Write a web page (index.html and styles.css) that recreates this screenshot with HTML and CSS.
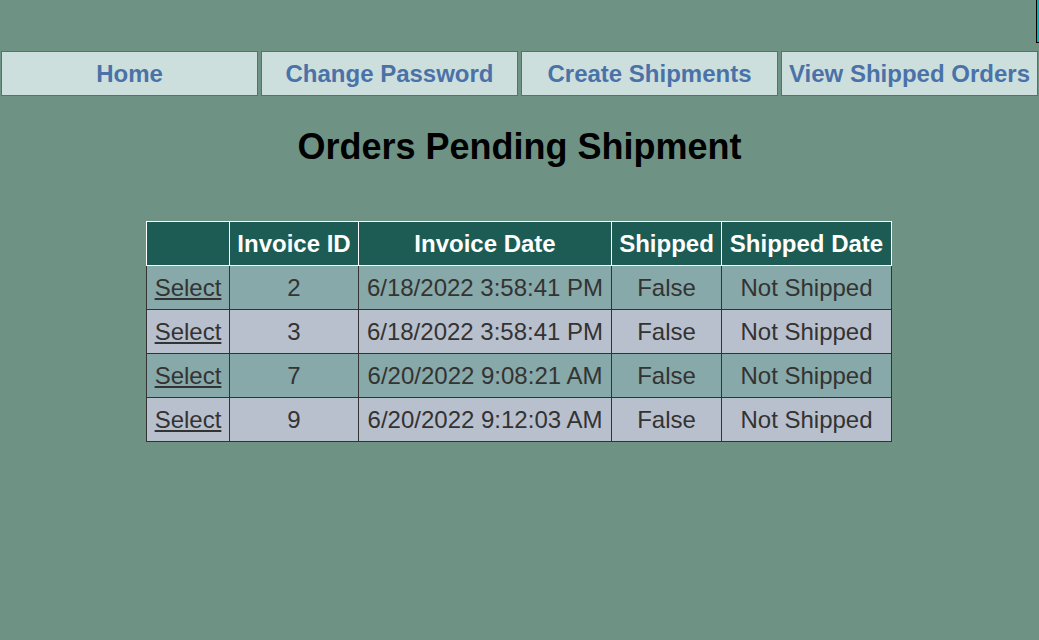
FILE: index.html
```html
<!DOCTYPE html>
<html>
<head>
<meta charset="utf-8">
<link rel="stylesheet" href="styles.css">
</head>
<body>
<div class="corner"></div>
<nav class="nav">
  <a class="nav-btn" href="#">Home</a>
  <a class="nav-btn" href="#">Change Password</a>
  <a class="nav-btn" href="#">Create Shipments</a>
  <a class="nav-btn" href="#">View Shipped Orders</a>
</nav>
<h1 class="title">Orders Pending Shipment</h1>
<table class="orders">
  <colgroup>
    <col class="c1"><col class="c2"><col class="c3"><col class="c4"><col class="c5">
  </colgroup>
  <thead>
    <tr><th></th><th>Invoice ID</th><th>Invoice Date</th><th>Shipped</th><th>Shipped Date</th></tr>
  </thead>
  <tbody>
    <tr class="odd"><td><a href="#">Select</a></td><td>2</td><td>6/18/2022 3:58:41 PM</td><td>False</td><td>Not Shipped</td></tr>
    <tr class="even"><td><a href="#">Select</a></td><td>3</td><td>6/18/2022 3:58:41 PM</td><td>False</td><td>Not Shipped</td></tr>
    <tr class="odd"><td><a href="#">Select</a></td><td>7</td><td>6/20/2022 9:08:21 AM</td><td>False</td><td>Not Shipped</td></tr>
    <tr class="even"><td><a href="#">Select</a></td><td>9</td><td>6/20/2022 9:12:03 AM</td><td>False</td><td>Not Shipped</td></tr>
  </tbody>
</table>
</body>
</html>
```
FILE: styles.css
```css
html, body {
  margin: 0;
  padding: 0;
  background: #6e9385;
  font-family: "Liberation Sans", Arial, sans-serif;
}
body {
  position: relative;
  min-height: 640px;
  overflow: hidden;
}
.corner {
  position: absolute;
  left: 1036px;
  top: 0;
  width: 10px;
  height: 42px;
  background: #00b4b4;
  border-left: 1px solid #000;
  border-bottom: 1px solid #000;
}
.nav {
  display: flex;
  gap: 3px;
  padding: 51px 0 0 1px;
}
.nav-btn {
  box-sizing: border-box;
  width: 257px;
  height: 45px;
  padding-top: 1px;
  display: flex;
  align-items: center;
  justify-content: center;
  background: #cddfdc;
  border: 1px solid #4a6f9c;
  color: #4a72a8;
  font-weight: bold;
  font-size: 24px;
  text-decoration: none;
  white-space: nowrap;
}
.title {
  margin: 0;
  padding-top: 30px;
  text-align: center;
  font-size: 36px;
  line-height: 42px;
  font-weight: bold;
  color: #000;
}
.orders {
  margin: 53px 0 0 146px;
  border-collapse: collapse;
  table-layout: fixed;
  width: 745px;
  font-size: 24px;
  color: #333;
}
.c1 { width: 83px; }
.c2 { width: 129px; }
.c3 { width: 253px; }
.c4 { width: 110px; }
.c5 { width: 170px; }
.orders th {
  background: #1c5c55;
  color: #fff;
  border: 1px solid #fff;
  height: 43px;
  padding: 0;
  font-size: 24px;
  font-weight: bold;
  white-space: nowrap;
}
.orders td {
  border: 1px solid #333;
  height: 43px;
  padding: 0;
  text-align: center;
  white-space: nowrap;
}
.orders tr.odd td { background: #87a9a9; }
.orders tr.even td { background: #b9c0cd; }
.orders td a { color: #333; text-decoration: underline; }
```
